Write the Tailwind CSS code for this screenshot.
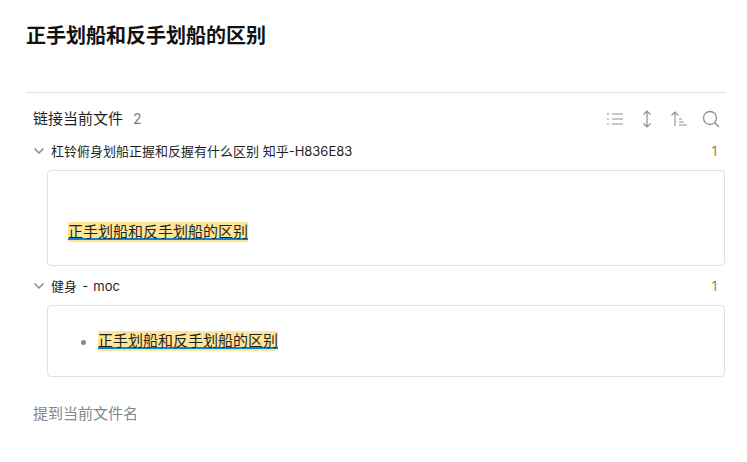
<!DOCTYPE html>
<html lang="zh-CN">
<head>
  <meta charset="UTF-8" />
  <title>正手划船和反手划船的区别</title>
  <script src="https://cdn.jsdelivr.net/npm/@tailwindcss/browser@4"></script>
</head>
<body class="bg-white text-[#1f1f1f] font-['Inter','Noto_Sans_CJK_SC',sans-serif]">
  <div class="w-[747px] h-[462px] overflow-hidden pl-[26px] pr-[21px]">
    <h1 class="pt-[22px] h-[92px] text-[20px] leading-[28px] font-bold text-[#111111]">正手划船和反手划船的区别</h1>

    <div class="border-t border-[#e3e3e3]">
      <!-- header -->
      <div class="flex items-center h-[53px] pl-[7px] pb-[1px]">
        <span class="text-[15px] leading-[20px]">链接当前文件</span>
        <span class="ml-[10px] text-[14px] leading-[20px] text-[#7f7f7f]">2</span>
        <div class="ml-auto flex items-center gap-[14px] pr-[6px] text-[#8f8f8f]">
          <svg class="w-[18px] h-[18px]" viewBox="0 0 18 18" fill="none" stroke="currentColor" stroke-width="1.1"><path d="M6 4h11M6 9h11M6 14h11M1 4h2M1 9h2M1 14h2"/></svg>
          <svg class="w-[18px] h-[18px]" viewBox="0 0 18 18" fill="none" stroke="currentColor" stroke-width="1.2"><path d="M9 1v16M5.500 4.500 9 1l3.500 3.500M5.500 13.500 9 17l3.500-3.500"/></svg>
          <svg class="w-[18px] h-[18px]" viewBox="0 0 18 18" fill="none" stroke="currentColor" stroke-width="1.1"><path d="M5 16V2M1.500 5.500 5 2l3.500 3.500M9 9h3M9 12h5M9 15h8"/></svg>
          <svg class="w-[18px] h-[18px]" viewBox="0 0 18 18" fill="none" stroke="currentColor" stroke-width="1.300"><circle cx="8" cy="8" r="6.500"/><path d="m13 13 4 4"/></svg>
        </div>
      </div>

      <!-- first file -->
      <div class="flex items-center h-[24px] -mt-[7px] pl-[7px] pr-[9px] text-[13px] leading-[18px]">
        <svg class="w-[12px] h-[12px] text-[#8a8a8a]" viewBox="0 0 12 12" fill="none" stroke="currentColor" stroke-width="1.500"><path d="m1.500 3.500 4.500 4.500 4.500-4.500"/></svg>
        <span class="ml-[6px]">杠铃俯身划船正握和反握有什么区别 知乎-H836E83</span>
        <span class="ml-auto text-[#9a7b4a]">1</span>
      </div>
      <div class="ml-[21px] mr-px mt-[7px] h-[96px] border border-[#e0e0e0] rounded-[4px] pl-[20px] pt-[48px]">
        <span class="inline-block h-[20px] bg-[#ffe597] underline decoration-[#0a84d6] decoration-2 [text-decoration-skip-ink:none] text-[15px] leading-[20px]">正手划船和反手划船的区别</span>
      </div>

      <!-- second file -->
      <div class="flex items-center h-[24px] mt-[8px] pl-[7px] pr-[9px] text-[13px] leading-[18px]">
        <svg class="w-[12px] h-[12px] text-[#8a8a8a]" viewBox="0 0 12 12" fill="none" stroke="currentColor" stroke-width="1.500"><path d="m1.500 3.500 4.500 4.500 4.500-4.500"/></svg>
        <span class="ml-[6px] [word-spacing:1.5px]">健身 - moc</span>
        <span class="ml-auto text-[#9a7b4a]">1</span>
      </div>
      <div class="ml-[21px] mr-px mt-[7px] h-[72px] border border-[#e0e0e0] rounded-[4px] pl-[33px] pt-[25px] flex items-start">
        <span class="w-[5px] h-[5px] mt-[9px] rounded-full bg-[#8a8a8a]"></span>
        <span class="ml-[12px] inline-block h-[20px] bg-[#ffe597] underline decoration-[#0a84d6] decoration-2 [text-decoration-skip-ink:none] text-[15px] leading-[20px]">正手划船和反手划船的区别</span>
      </div>

      <div class="mt-[27px] pl-[7px] text-[15px] leading-[20px] text-[#7f8790]">提到当前文件名</div>
    </div>
  </div>
</body>
</html>
